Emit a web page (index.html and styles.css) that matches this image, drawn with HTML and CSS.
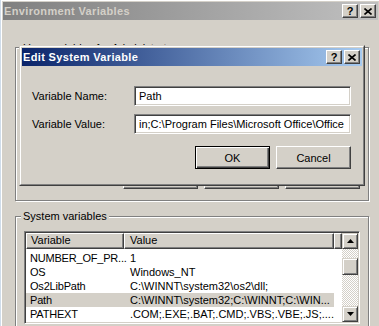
FILE: index.html
```html
<!DOCTYPE html>
<html>
<head>
	<title>Environment Variables</title>
	<meta http-equiv="Content-Type" content="text/html;charset=utf-8">
	<link rel="stylesheet" href="styles.css">
</head>
<body>
	<div class="window">
		<div class="frame">
			<div class="titlebar inactive">
				<span class="title">Environment Variables</span>
				<div class="cap-btns">
					<span class="cap-btn">?</span>
					<span class="cap-btn"><svg width="8" height="7" viewBox="0 0 8 7"><path d="M0.5 0.5L7.5 6.5M7.5 0.5L0.5 6.5" stroke="#000" stroke-width="1.6"/></svg></span>
				</div>
			</div>
			<div class="client">
				<div class="group user">
					<span class="group-label">User variables for Administrator</span>
					<div class="listview small">
						<div class="lv-main">
							<div class="lv-header"><span class="hc c1"></span><span class="hc c2"></span><span class="hc fill"></span></div>
						</div>
					</div>
					<div class="btn-row">
						<span class="btn"></span>
						<span class="btn"></span>
						<span class="btn"></span>
					</div>
				</div>
				<div class="group system">
					<span class="group-label">System variables</span>
					<div class="listview">
						<div class="lv-main">
							<div class="lv-header"><span class="hc c1">Variable</span><span class="hc c2">Value</span><span class="hc fill"></span></div>
							<div class="lv-rows">
								<div class="row"><span class="c1">NUMBER_OF_PR...</span><span class="c2">1</span></div>
								<div class="row"><span class="c1">OS</span><span class="c2">Windows_NT</span></div>
								<div class="row"><span class="c1">Os2LibPath</span><span class="c2">C:\WINNT\system32\os2\dll;</span></div>
								<div class="row sel"><span class="c1">Path</span><span class="c2">C:\WINNT\system32;C:\WINNT;C:\WIN...</span></div>
								<div class="row"><span class="c1">PATHEXT</span><span class="c2">.COM;.EXE;.BAT;.CMD;.VBS;.VBE;.JS;....</span></div>
							</div>
						</div>
						<div class="scrollbar">
							<span class="sb-btn"><svg width="7" height="4" viewBox="0 0 7 4"><polygon points="3.5,0 7,4 0,4" fill="#000"/></svg></span>
							<span class="sb-track top"></span>
							<span class="sb-thumb"></span>
							<span class="sb-track"></span>
							<span class="sb-btn"><svg width="7" height="4" viewBox="0 0 7 4"><polygon points="0,0 7,0 3.5,4" fill="#000"/></svg></span>
						</div>
					</div>
				</div>
			</div>
		</div>
	</div>

	<!-- Dialog over the main window -->
	<div class="dialog">
		<div class="frame">
			<div class="titlebar">
				<span class="title">Edit System Variable</span>
				<div class="cap-btns">
					<span class="cap-btn">?</span>
					<span class="cap-btn"><svg width="8" height="7" viewBox="0 0 8 7"><path d="M0.5 0.5L7.5 6.5M7.5 0.5L0.5 6.5" stroke="#000" stroke-width="1.6"/></svg></span>
				</div>
			</div>
			<div class="dlg-body">
				<span class="label">Variable Name:</span>
				<div class="field">Path</div>
				<span class="label">Variable Value:</span>
				<div class="field">in;C:\Program Files\Microsoft Office\Office</div>
				<div class="btn-row dlg-btns">
					<span class="btn default">OK</span>
					<span class="btn">Cancel</span>
				</div>
			</div>
		</div>
	</div>
</body>
</html>
```

FILE: styles.css
```css
html,body{height:326px;overflow:hidden}
body{margin:0;position:relative;width:379px;background:#d4d0c8;font:11px "Liberation Sans",Arial,sans-serif;color:#000}

/* window frames */
.window{margin-top:-1px;width:381px;height:327px;overflow:hidden;box-sizing:border-box;border:1px solid;border-bottom:0;border-color:#d4d0c8 #404040 #404040 #cfdcea}
.frame{height:100%;box-sizing:border-box;border:1px solid;border-color:#fff #808080 #808080 #fff;padding:1px;background:#d4d0c8}
.window>.frame{border-bottom:0;padding-bottom:0}
.dialog{position:absolute;left:19px;top:45px;width:346px;height:141px;box-sizing:border-box;border:1px solid;border-color:#d4d0c8 #404040 #404040 #d4d0c8}

/* caption */
.titlebar{height:18px;display:flex;align-items:center;padding:0 2px 0 1px;margin-bottom:1px;background:linear-gradient(to right,#0a246a,#a6caf0);color:#fff;font-weight:bold;letter-spacing:.35px}
.titlebar.inactive{background:linear-gradient(to right,#808080,#c0c0c0);color:#d4d0c8}
.title{flex:1;white-space:nowrap}
.cap-btns{display:flex;gap:2px}
.cap-btn{width:16px;height:14px;box-sizing:border-box;border:1px solid;border-color:#fff #404040 #404040 #fff;box-shadow:inset -1px -1px #808080;background:#d4d0c8;display:flex;align-items:center;justify-content:center;color:#000;font-size:11px;font-weight:bold;letter-spacing:0;line-height:12px}

/* group boxes */
.group{margin-left:12px;width:354px;box-sizing:border-box;border:1px solid #808080;box-shadow:inset 1px 1px #fff,1px 1px #fff;padding:0 8px 11px 8px;display:flex;flex-direction:column}
.group-label{align-self:flex-start;margin:-6px 0 0 -3px;padding:0 2px;background:#d4d0c8;line-height:13px;white-space:nowrap}
.system .group-label{margin-top:-7px}
.user{margin-top:27px;height:154px}
.system{margin-top:15px;height:120px}

/* buttons */
.btn-row{display:flex;justify-content:flex-end;gap:6px}
.user .btn-row{margin-top:auto}
.btn{width:75px;height:23px;box-sizing:border-box;border:1px solid;border-color:#fff #404040 #404040 #fff;box-shadow:inset -1px -1px #808080;background:#d4d0c8;display:flex;align-items:center;justify-content:center}
.btn.default{border-color:#000;box-shadow:inset 1px 1px #fff,inset -1px -1px #404040,inset -2px -2px #808080}

/* list view */
.listview{display:flex;width:336px;height:93px;box-sizing:border-box;border:1px solid;border-color:#808080 #fff #fff #808080;box-shadow:inset 1px 1px #404040,inset -1px -1px #d4d0c8;padding:1px;background:#fff;margin-top:8px}
.listview.small{height:auto;flex:1;margin-bottom:8px}
.lv-main{flex:1;overflow:hidden}
.lv-header{display:flex;height:16px}
.hc{box-sizing:border-box;height:16px;border:1px solid;border-color:#fff #404040 #404040 #fff;box-shadow:inset -1px -1px #808080;background:#d4d0c8;padding-left:4px;line-height:13px;white-space:nowrap}
.hc.c2{padding-left:5px}
.hc.fill{flex:1}
.c1{width:98px;flex:none;box-sizing:border-box}
.c2{width:210px;flex:none;box-sizing:border-box}
.lv-rows{padding-top:2px}
.row{display:flex;height:14px;line-height:14px;white-space:nowrap}
.row .c1{padding-left:4px;letter-spacing:-.2px}
.row .c2{padding-left:6px;overflow:hidden}
.row.sel .c1,.row.sel .c2{background:#d4d0c8}

/* scroll bar */
.scrollbar{width:16px;display:flex;flex-direction:column;background-color:#fff;background-image:repeating-conic-gradient(#d4d0c8 0 25%,#fff 0 50%);background-size:2px 2px}
.sb-btn,.sb-thumb{flex:none;box-sizing:border-box;border:1px solid;border-color:#d4d0c8 #404040 #404040 #d4d0c8;box-shadow:inset 1px 1px #fff,inset -1px -1px #808080;background:#d4d0c8}
.sb-btn{height:16px;display:flex;align-items:center;justify-content:center}
.sb-thumb{height:17px}
.sb-track{flex:1}
.sb-track.top{flex:none;height:9px}

/* dialog content */
.dlg-body{display:grid;grid-template-columns:1fr 217px;row-gap:8px;align-items:center;padding:19px 11px 0 10px}
.field{height:20px;box-sizing:border-box;border:1px solid;border-color:#808080 #fff #fff #808080;box-shadow:inset 1px 1px #404040,inset -1px -1px #d4d0c8;background:#fff;padding:0 2px 0 4px;line-height:18px;white-space:nowrap;overflow:hidden}
.dlg-btns{grid-column:1 / -1;margin-top:4px}
```
